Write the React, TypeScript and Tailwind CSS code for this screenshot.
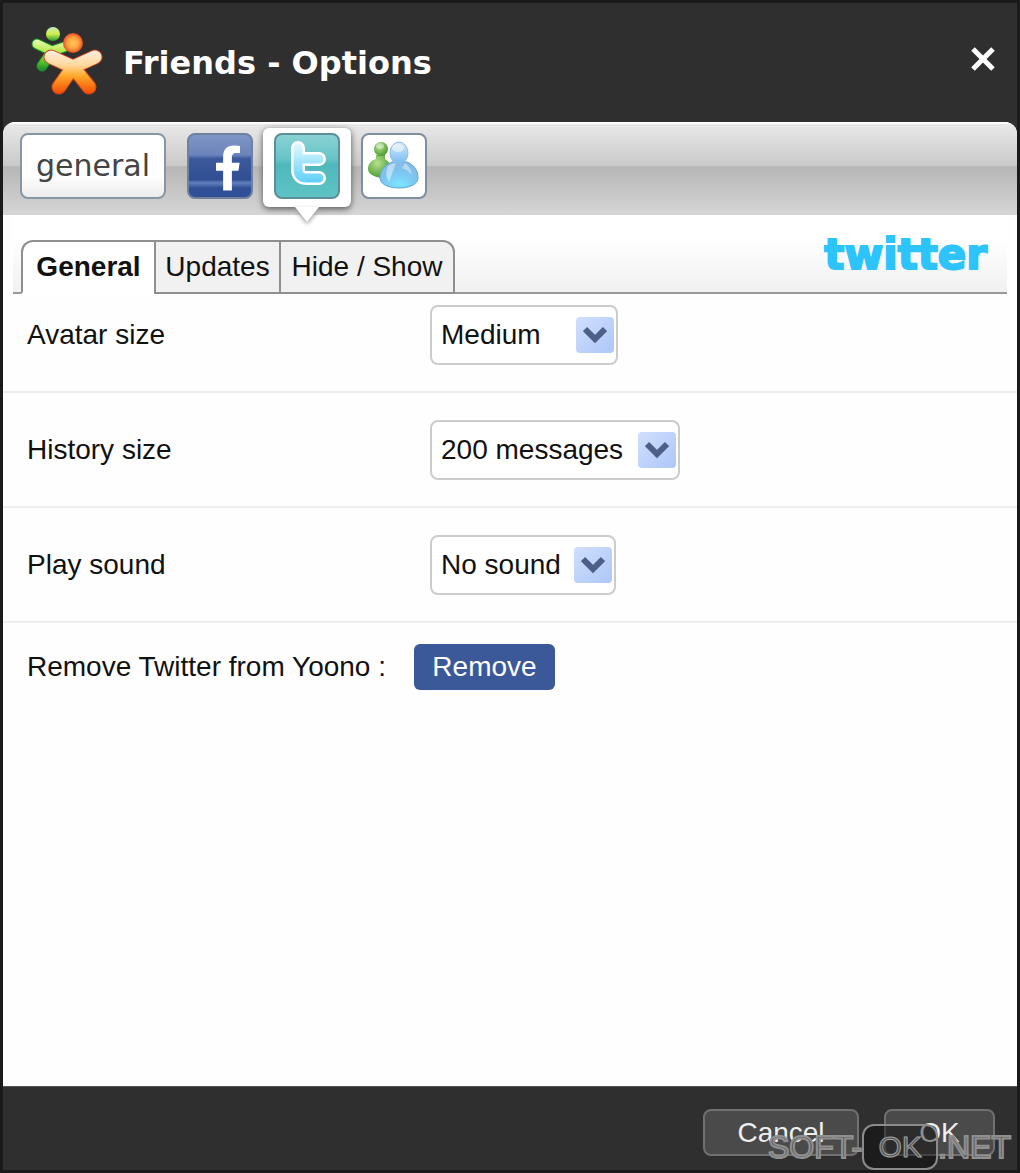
import { useState } from "react";
import { FaFacebookF } from "react-icons/fa";

const TABS = [
  { name: "General", width: "w-[135px]" },
  { name: "Updates", width: "w-[127px]" },
  { name: "Hide / Show", width: "w-[176px]" },
];

const SETTINGS = [
  {
    id: "avatar-size",
    label: "Avatar size",
    options: ["Medium", "Small", "Large"],
    row: "pt-[11px] pb-[26px]",
    width: "w-[188px]",
  },
  {
    id: "history-size",
    label: "History size",
    options: ["200 messages", "100 messages", "50 messages"],
    row: "pt-[27px] pb-[26px]",
    width: "w-[250px]",
  },
  {
    id: "play-sound",
    label: "Play sound",
    options: ["No sound", "Chime", "Beep"],
    row: "pt-[27px] pb-[26px]",
    width: "w-[186px]",
  },
];

const FriendsLogo = () => (
  <svg viewBox="0 0 76 74" className="h-[74px] w-[76px]" fill="none" strokeLinecap="round" strokeLinejoin="round" aria-hidden="true">
    <defs>
      <linearGradient id="green" gradientUnits="userSpaceOnUse" x1="0" y1="14" x2="0" y2="46">
        <stop offset="0" stopColor="#e9f9b5" />
        <stop offset="0.35" stopColor="#b5ec4a" />
        <stop offset="0.7" stopColor="#4fc02a" />
        <stop offset="1" stopColor="#0f7f2c" />
      </linearGradient>
      <linearGradient id="orange" gradientUnits="userSpaceOnUse" x1="0" y1="23" x2="0" y2="68">
        <stop offset="0" stopColor="#fff0e6" />
        <stop offset="0.35" stopColor="#ffd9a0" />
        <stop offset="0.6" stopColor="#ffa92a" />
        <stop offset="1" stopColor="#f44a00" />
      </linearGradient>
      <radialGradient id="head" cx="0.5" cy="0.5" r="0.55">
        <stop offset="0" stopColor="#ffc65c" />
        <stop offset="0.5" stopColor="#ffa63d" />
        <stop offset="0.8" stopColor="#f0642e" />
        <stop offset="1" stopColor="#c93a1c" />
      </radialGradient>
      <linearGradient id="greenHead" x1="0" y1="0" x2="0" y2="1">
        <stop offset="0" stopColor="#bfe8c4" />
        <stop offset="0.5" stopColor="#d3ee4a" />
        <stop offset="1" stopColor="#1f9c2c" />
      </linearGradient>
    </defs>
    <circle cx="25" cy="8" r="7" fill="url(#greenHead)" />
    <path d="M9 18l15 7 12-4M24 25L14 40" stroke="#1d8f2c" strokeWidth="11" />
    <path d="M9 18l15 7 12-4M24 25L14 40" stroke="url(#green)" strokeWidth="9" />
    <path d="M23 31l22 10 22-10M45 41L31 61M45 41l16 20" stroke="#cf4420" strokeWidth="15" />
    <path d="M23 31l22 10 22-10M45 41L31 61M45 41l16 20" stroke="url(#orange)" strokeWidth="13" />
    <circle cx="45" cy="17" r="10" fill="url(#head)" />
  </svg>
);

const TwitterMark = () => (
  <svg viewBox="0 0 62 62" className="size-full" fill="none" strokeLinecap="round" strokeLinejoin="round" aria-hidden="true">
    <defs>
      <linearGradient id="tee" gradientUnits="userSpaceOnUse" x1="0" y1="8" x2="0" y2="50">
        <stop offset="0" stopColor="#e4f9ff" />
        <stop offset="1" stopColor="#56cdf8" />
      </linearGradient>
    </defs>
    <path d="M22 13v21q0 9 9 9h12M22 24h21" stroke="#fff" strokeWidth="14" />
    <path d="M22 13v21q0 9 9 9h12M22 24h21" stroke="url(#tee)" strokeWidth="9" />
  </svg>
);

const MessengerMark = () => (
  <svg viewBox="0 0 62 62" className="size-full" aria-hidden="true">
    <defs>
      <radialGradient id="buddyGreen" cx="0.4" cy="0.35" r="0.7">
        <stop offset="0" stopColor="#b7e08e" />
        <stop offset="1" stopColor="#43982a" />
      </radialGradient>
      <radialGradient id="buddyBlue" cx="0.5" cy="0.85" r="0.8">
        <stop offset="0" stopColor="#7be6ff" />
        <stop offset="0.5" stopColor="#7cc8f2" />
        <stop offset="1" stopColor="#86b9e4" />
      </radialGradient>
      <linearGradient id="buddyHead" x1="0" y1="0" x2="0" y2="1">
        <stop offset="0" stopColor="#d8e8f8" />
        <stop offset="1" stopColor="#74bdf2" />
      </linearGradient>
    </defs>
    <path d="M5 34c0-6 4-9 8-10v-4h9v4c3 2 5 4 6 8l-9 11c-8-1-14-4-14-9z" fill="url(#buddyGreen)" />
    <circle cx="18" cy="14" r="7" fill="url(#buddyGreen)" />
    <ellipse cx="17" cy="11" rx="4" ry="3" fill="#fff" opacity="0.4" />
    <path
      d="M17 43c0-8 5-13 12-16h15c7 3 11 8 11 16 0 6-8 10-19 10s-19-4-19-10z"
      fill="url(#buddyBlue)"
      stroke="#5fa6da"
    />
    <path d="M25 31q4-3 8-3l-7 19q-5-7-1-16z" fill="#fff" opacity="0.45" />
    <path d="M42 28q6 4 7 12-4-5-10-7z" fill="#fff" opacity="0.4" />
    <ellipse cx="36" cy="18" rx="9" ry="11" fill="url(#buddyHead)" stroke="#94bee5" />
    <ellipse cx="35" cy="13" rx="6" ry="4" fill="#fff" opacity="0.5" />
  </svg>
);

const Watermark = () => (
  <div className="pointer-events-none absolute right-[6px] bottom-0 flex items-center font-['Liberation_Sans',Arial,sans-serif] text-[32px] leading-none text-[#555] [-webkit-text-stroke:2px_#909090]">
    <span>SOFT-</span>
    <span className="flex h-[46px] w-[76px] items-center justify-center rounded-xl border-2 border-[#8b8b8b] bg-black/40 text-[30px] [-webkit-text-stroke:1px_#a0a0a0]">
      OK
    </span>
    <span>.NET</span>
  </div>
);

export default function App() {
  const [tab, setTab] = useState("General");

  return (
    <div className="relative flex min-h-screen flex-col border-[3px] border-[#1a1a1a] bg-[#2f2f2f] font-['Liberation_Sans',Arial,sans-serif] text-[28px] leading-8 text-[#111]">
      {/* title bar */}
      <header className="flex h-[119px] items-center justify-between pr-[22px] pl-[25px]">
        <div className="flex items-center gap-[19px]">
          <FriendsLogo />
          <h1 className="font-['DejaVu_Sans',Verdana,sans-serif] text-[32px] font-bold text-white">
            Friends - Options
          </h1>
        </div>
        <button aria-label="Close" className="mb-2">
          <svg viewBox="0 0 24 24" className="size-6" stroke="#fff" strokeWidth="5">
            <path d="M2 2l20 20M22 2L2 22" />
          </svg>
        </button>
      </header>

      <main className="flex-1 overflow-hidden rounded-t-xl bg-[#fefefe]">
        {/* service bar */}
        <nav className="flex h-[93px] items-start border-t-2 border-white bg-[linear-gradient(#e9e9e9,#c9c9c9_46%,#b6b6b6_47%,#d6d6d6)] pt-[9px] pl-[17px]">
          <button className="h-[66px] w-[146px] rounded-lg border-2 border-[#8796a5] bg-linear-to-b from-white from-65% to-[#ececec] font-['DejaVu_Sans',Verdana,sans-serif] text-[30px] text-[#444]">
            general
          </button>
          <button
            aria-label="Facebook"
            className="ml-[21px] flex size-[66px] items-end justify-center rounded-lg border-2 border-[#70819f] bg-[linear-gradient(#7f95c6,#6c84bb_32%,#3c5a9c_38%,#304f93_72%,#6280bb_77%,#2f4f96_86%)] pb-[6px] pl-4"
          >
            <FaFacebookF className="h-[46px] w-7 text-white" />
          </button>
          <div className="relative z-10 -mt-[5px] ml-[10px] rounded-md bg-white px-[11px] pt-[5px] pb-2 shadow-[0_2px_6px_#555]">
            <button
              aria-label="Twitter"
              className="block size-[66px] overflow-hidden rounded-lg border-2 border-[#5e8f98] bg-[linear-gradient(#8ad2d4,#66c3c6_40%,#4fb8bb_47%,#5fc3c5)]"
            >
              <TwitterMark />
            </button>
            <svg
              viewBox="0 0 24 16"
              className="absolute top-full left-1/2 h-4 w-6 -translate-x-1/2 drop-shadow-[0_2px_2px_#999]"
              aria-hidden="true"
            >
              <path d="M0 0h24L12 15z" fill="#fff" />
            </svg>
          </div>
          <button
            aria-label="Messenger"
            className="ml-[10px] size-[66px] rounded-lg border-2 border-[#7f8ea0] bg-white"
          >
            <MessengerMark />
          </button>
        </nav>

        {/* tabs */}
        <div className="mx-[10px] flex h-[79px] items-end justify-between border-b-2 border-[#999] bg-linear-to-b from-white from-30% to-[#f1f1f1] pl-2">
          <div role="tablist" className="-mb-[2px] flex">
            {TABS.map(({ name, width }) => (
              <button
                key={name}
                role="tab"
                aria-selected={tab === name}
                onClick={() => setTab(name)}
                className={`-ml-[2px] h-[54px] border-2 border-[#8f8f8f] first:ml-0 first:rounded-tl-xl last:rounded-tr-xl ${width} ${
                  tab === name ? "border-b-white bg-white font-bold" : "bg-[#f1f1f1]"
                }`}
              >
                {name}
              </button>
            ))}
          </div>
          <span className="self-start pt-5 pr-5 font-['DejaVu_Sans',Verdana,sans-serif] text-[42px] leading-10 font-bold text-[#2cc4fb] [-webkit-text-stroke:2px_#2cc4fb]">
            twitter
          </span>
        </div>

        {/* settings */}
        <form onSubmit={(e) => e.preventDefault()}>
          {SETTINGS.map((s) => (
            <div key={s.id} className={`flex items-center border-b-2 border-[#eee] pl-6 ${s.row}`}>
              <label htmlFor={s.id} className="w-[403px]">
                {s.label}
              </label>
              <div className={`relative ${s.width}`}>
                <select
                  id={s.id}
                  className="h-[60px] w-full appearance-none rounded-lg border-2 border-[#ccc] bg-white pl-[9px]"
                >
                  {s.options.map((o) => (
                    <option key={o}>{o}</option>
                  ))}
                </select>
                <span className="pointer-events-none absolute top-3 right-1 flex h-9 w-[38px] items-center justify-center rounded-sm bg-linear-to-br from-[#d0dffd] to-[#adc7f8]">
                  <svg viewBox="0 0 24 18" className="h-[18px] w-6" fill="none" stroke="#4b5f87" strokeWidth="6">
                    <path d="M2 3l10 10L22 3" />
                  </svg>
                </span>
              </div>
            </div>
          ))}
          <div className="flex items-center gap-7 pt-[21px] pl-6">
            <span>Remove Twitter from Yoono :</span>
            <button className="h-[46px] w-[141px] rounded-md bg-[#3b5998] text-white">Remove</button>
          </div>
        </form>
      </main>

      <footer className="flex h-[84px] items-start justify-end gap-[25px] border-t border-[#555] pt-[22px] pr-[22px] text-[#eee]">
        <button className="h-[47px] w-[156px] rounded-lg border-2 border-[#707070] bg-[#4a4a4a]">Cancel</button>
        <button className="h-[47px] w-[111px] rounded-lg border-2 border-[#707070] bg-[#4a4a4a]">OK</button>
      </footer>
      <Watermark />
    </div>
  );
}
